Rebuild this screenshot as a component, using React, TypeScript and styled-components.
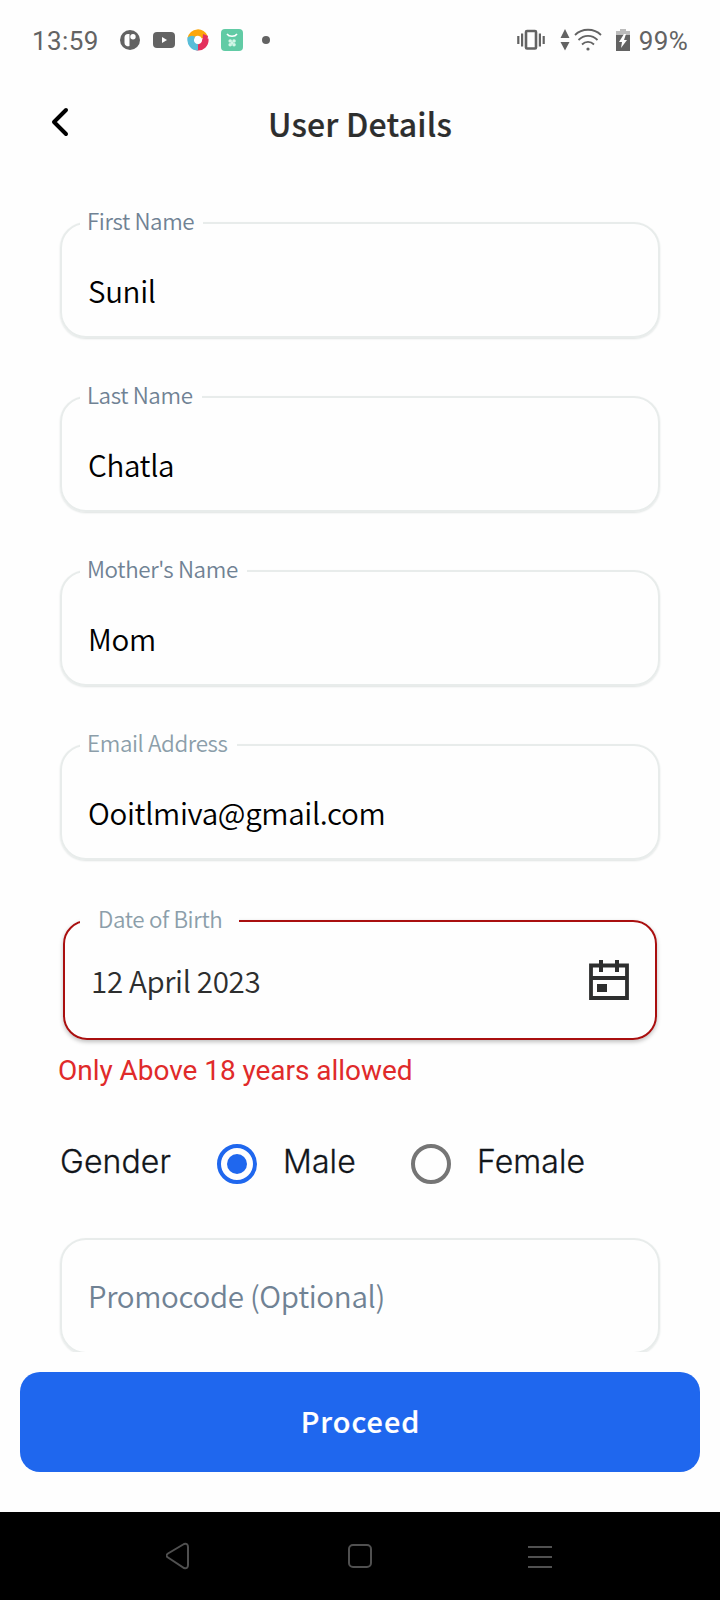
import React, { useState } from "react";
import styled, { createGlobalStyle } from "styled-components";

const sans = '"Noto Sans CJK SC", "Noto Sans", sans-serif';

const GlobalStyle = createGlobalStyle`
  * { box-sizing: border-box; }
  body { margin: 0; background: #fff; font-family: ${sans}; }
`;

const Screen = styled.div`
  width: 720px;
  height: 1600px;
  display: flex;
  flex-direction: column;
  background: #fefefe;
  overflow: hidden;
`;

const StatusBar = styled.div`
  height: 80px;
  padding: 0 32px 0 32px;
  display: flex;
  align-items: center;
  justify-content: space-between;
  color: #636363;
  font-family: Roboto, sans-serif;
  flex: none;
`;

const StatusGroup = styled.div`
  display: flex;
  align-items: center;
`;

const StatusText = styled.span<{ $gap?: number; $spacing?: number }>`
  font-size: 26px;
  line-height: 30px;
  letter-spacing: ${(p) => p.$spacing ?? 0}px;
  margin-left: ${(p) => p.$gap ?? 0}px;
  padding-top: 2px;
`;

const Icon = styled.svg<{ $gap?: number }>`
  display: block;
  flex: none;
  margin-left: ${(p) => p.$gap ?? 0}px;
`;

const Header = styled.header`
  height: 90px;
  display: grid;
  grid-template-columns: 120px 1fr 120px;
  align-items: center;
  flex: none;
`;

const BackButton = styled.button`
  border: 0;
  background: none;
  padding: 0 0 6px 48px;
  height: 90px;
`;

const Title = styled.h1`
  margin: 0;
  padding: 0 0 4px 0;
  text-align: center;
  font-size: 32px;
  line-height: 48px;
  font-weight: 500;
  letter-spacing: 0.2px;
  -webkit-text-stroke: 0.2px #2d2e2e;
  color: #2d2e2e;
`;

const Form = styled.form`
  height: 1182px;
  padding: 52px 60px 0;
  overflow: hidden;
  flex: none;
`;

const Field = styled.div`
  position: relative;
  height: 116px;
  margin-bottom: 58px;
  padding: 0 26px;
  border: 2px solid #e8eceb;
  border-radius: 26px;
  box-shadow: 0 1px 2px #dfe3e2;
  display: flex;
  align-items: center;
`;

const DateField = styled(Field)`
  height: 120px;
  margin: 60px 3px 0;
  padding: 0 26px 0 26px;
  border-color: #a90f0f;
  border-radius: 24px;
  box-shadow: 0 2px 4px rgba(0, 0, 0, 0.25);
  justify-content: space-between;
`;

const Label = styled.label<{ $muted?: boolean; $wide?: boolean }>`
  position: absolute;
  left: ${(p) => (p.$wide ? 15 : 18)}px;
  top: -20px;
  padding: ${(p) => (p.$wide ? "0 17px 0 18px" : "0 9px 0 7px")};
  background: #fefefe;
  font-size: 22.4px;
  font-weight: 350;
  letter-spacing: ${(p) => (p.$wide ? -0.36 : -0.4)}px;
  line-height: 32px;
  color: ${(p) => (p.$muted ? "#8c9eaa" : "#708294")};
`;

const Input = styled.input`
  width: 100%;
  height: 48px;
  margin-top: 20px;
  padding: 0;
  border: 0;
  outline: 0;
  background: none;
  font-family: ${sans};
  font-size: 29.6px;
  font-weight: 350;
  letter-spacing: -0.35px;
  color: #000;
`;

const PromoInput = styled(Input)`
  margin-top: -2px;
  &::placeholder { color: #708294; opacity: 1; }
`;

const DateValue = styled.span`
  font-size: 29.6px;
  font-weight: 350;
  letter-spacing: -0.37px;
  line-height: 44px;
  padding-top: 2px;
  color: #2d2e2e;
`;

const ErrorText = styled.p`
  margin: 14px 0 0 -2px;
  height: 33px;
  font-family: Roboto, sans-serif;
  font-size: 28px;
  line-height: 34px;
  letter-spacing: -0.04px;
  color: #e02a2a;
`;

const GenderRow = styled.div`
  height: 60px;
  margin: 47px 0 44px;
  display: flex;
  align-items: center;
  font-family: Inter, sans-serif;
  font-size: 32px;
  font-weight: 350;
  letter-spacing: 0.1px;
  -webkit-text-stroke: 0.3px #11151a;
  color: #11151a;
`;

const GenderTitle = styled.span`
  width: 157px;
  line-height: 40px;
  margin-top: -4px;
`;

const Option = styled.label<{ $width: number }>`
  width: ${(p) => p.$width}px;
  display: flex;
  align-items: center;
  gap: 26px;
`;

const OptionText = styled.span`
  line-height: 40px;
  margin-top: -4px;
`;

const Radio = styled.input`
  appearance: none;
  flex: none;
  width: 40px;
  height: 40px;
  margin: 0;
  border: 4px solid #757575;
  border-radius: 50%;
  display: grid;
  place-items: center;
  &:checked { border-color: #1f67ee; }
  &:checked::after {
    content: "";
    width: 20px;
    height: 20px;
    border-radius: 50%;
    background: #1f67ee;
  }
`;

const Footer = styled.div`
  flex: 1;
  padding: 20px 20px 40px;
`;

const Proceed = styled.button`
  width: 100%;
  height: 100px;
  border: 0;
  border-radius: 20px;
  background: #1f67ee;
  color: #fff;
  padding: 0 0 4px 1px;
  font-family: ${sans};
  font-size: 28.8px;
  font-weight: 500;
  -webkit-text-stroke: 0.2px #fff;
  letter-spacing: 1px;
`;

const NavBar = styled.nav`
  height: 88px;
  background: #000;
  display: grid;
  grid-template-columns: repeat(3, 180px);
  justify-content: center;
  align-items: center;
  justify-items: center;
  flex: none;
`;

const fields = [
  { label: "First Name", value: "Sunil" },
  { label: "Last Name", value: "Chatla" },
  { label: "Mother's Name", value: "Mom" },
  { label: "Email Address", value: "Ooitlmiva@gmail.com", muted: true },
];

export default function App() {
  const [gender, setGender] = useState("Male");
  return (
    <Screen>
      <GlobalStyle />
      <StatusBar>
        <StatusGroup>
          <StatusText $spacing={0.4}>13:59</StatusText>
          <Icon $gap={21} width="20" height="20" viewBox="0 0 20 20">
            <circle cx="10" cy="10" r="10" fill="#636363" />
            <path d="M9.500 4H8a3.500 3.500 0 0 0-3.500 3.500V13a3.500 3.500 0 0 0 5 3z" fill="#fff" />
            <circle cx="13" cy="6.700" r="2.700" fill="#fff" />
          </Icon>
          <Icon $gap={13} width="22" height="16" viewBox="0 0 22 16">
            <rect width="22" height="16" rx="4" fill="#636363" />
            <path d="M9 5v6l5-3z" fill="#fff" />
          </Icon>
          <Icon $gap={12} width="22" height="22" viewBox="0 0 22 22" fill="none" strokeWidth="6.400">
            <path d="M18.300 10a7.300 7.300 0 0 1-8.600 8.200" stroke="#e4305d" />
            <path d="M11 18.300A7.300 7.300 0 0 1 3.800 9.500" stroke="#59bdd8" />
            <path d="M3.800 9.500A7.300 7.300 0 0 1 17.800 8.300" stroke="#fca70a" />
            <path d="M16 5l5 2-1 8-5 1z" fill="#e4305d" />
            <path d="M.500 8.500Q4 5.500 8 7.500L6.500 12 1 13z" fill="#59bdd8" />
          </Icon>
          <Icon $gap={12} width="22" height="22" viewBox="0 0 22 22">
            <rect width="22" height="22" rx="4" fill="#61cba5" />
            <path d="M6 5c2 3 8 3 10 0" fill="none" stroke="#fff" strokeWidth="1.500" />
            <g fill="#d3f6e7">
              <circle cx="9.200" cy="12" r="1.800" />
              <circle cx="13" cy="12" r="1.800" />
              <circle cx="9.200" cy="15.800" r="1.800" />
              <circle cx="13" cy="15.800" r="1.800" />
              <circle cx="11.100" cy="13.900" r="1.300" />
            </g>
          </Icon>
          <Icon $gap={19} width="8" height="8" viewBox="0 0 8 8">
            <circle cx="4" cy="4" r="4" fill="#636363" />
          </Icon>
        </StatusGroup>
        <StatusGroup>
          <Icon width="28" height="22" viewBox="0 0 28 22" fill="none" stroke="#636363">
            <rect x="9" y="2" width="10" height="17.500" rx="1" strokeWidth="2.600" />
            <path d="M1.300 7v8M26.700 7v8" strokeWidth="2.200" />
            <path d="M5.100 4.500v13M22.900 4.500v13" strokeWidth="2.200" />
          </Icon>
          <Icon $gap={15} width="10" height="22" viewBox="0 0 10 22" fill="#636363">
            <path d="M5 0l4.500 9h-9zM5 21.500L.500 13h9z" />
          </Icon>
          <Icon $gap={4} width="28" height="24" viewBox="0 0 28 24" fill="none" stroke="#636363" strokeWidth="1.800">
            <path d="M1 7C8 0 20 0 27 7M4.500 12C10 6.500 18 6.500 23.500 12M8 16.500c3.500-3.500 8.500-3.500 12 0" />
            <circle cx="14" cy="21" r="1.600" fill="#636363" stroke="none" />
          </Icon>
          <Icon $gap={14} width="14" height="22" viewBox="0 0 14 22">
            <path d="M0 7V2h4V0h6v2h4v5z" fill="#bcbcbc" />
            <path d="M0 6h14v16H0z" fill="#636363" />
            <path d="M8 5L3 13h3l-1 6 6-8H8l2-6z" fill="#fff" />
          </Icon>
          <StatusText $gap={9} $spacing={0.3}>99%</StatusText>
        </StatusGroup>
      </StatusBar>
      <Header>
        <BackButton type="button" aria-label="Back">
          <Icon width="24" height="30" viewBox="0 0 24 30">
            <path d="M18 3L6 15l12 12" fill="none" stroke="#000" strokeWidth="4" strokeLinecap="round" strokeLinejoin="round" />
          </Icon>
        </BackButton>
        <Title>User Details</Title>
      </Header>
      <Form>
        {fields.map((f) => (
          <Field key={f.label}>
            <Label $muted={f.muted}>{f.label}</Label>
            <Input aria-label={f.label} defaultValue={f.value} />
          </Field>
        ))}
        <DateField>
          <Label $muted $wide>Date of Birth</Label>
          <DateValue>12 April 2023</DateValue>
          <Icon width="40" height="40" viewBox="0 0 40 40" fill="none" stroke="#2d2e2e">
            <path d="M2 5.500h36v32.500H2zM2 18h36" strokeWidth="3.800" />
            <path d="M12 0v12M28 0v12" strokeWidth="4" />
            <path d="M8 24h10v8H8z" fill="#2d2e2e" stroke="none" />
          </Icon>
        </DateField>
        <ErrorText>Only Above 18 years allowed</ErrorText>
        <GenderRow>
          <GenderTitle>Gender</GenderTitle>
          {["Male", "Female"].map((g) => (
            <Option key={g} $width={194}>
              <Radio type="radio" name="gender" checked={gender === g} onChange={() => setGender(g)} />
              <OptionText>{g}</OptionText>
            </Option>
          ))}
        </GenderRow>
        <Field>
          <PromoInput placeholder="Promocode (Optional)" />
        </Field>
      </Form>
      <Footer>
        <Proceed type="button">Proceed</Proceed>
      </Footer>
      <NavBar>
        <Icon width="28" height="28" viewBox="1 0 28 28" fill="none" stroke="#505050" strokeWidth="2">
          <path d="M19 2L3 11.500q-3 2 0 4L19 26q4 1 4-3V5q0-4-4-3z" />
        </Icon>
        <Icon width="24" height="24" viewBox="0 0 24 24" fill="none" stroke="#505050" strokeWidth="2">
          <rect x="1" y="1" width="22" height="22" rx="4" />
        </Icon>
        <Icon width="24" height="24" viewBox="0 0 24 24" stroke="#505050" strokeWidth="2">
          <path d="M0 3h24M0 13h24M0 23h24" />
        </Icon>
      </NavBar>
    </Screen>
  );
}
